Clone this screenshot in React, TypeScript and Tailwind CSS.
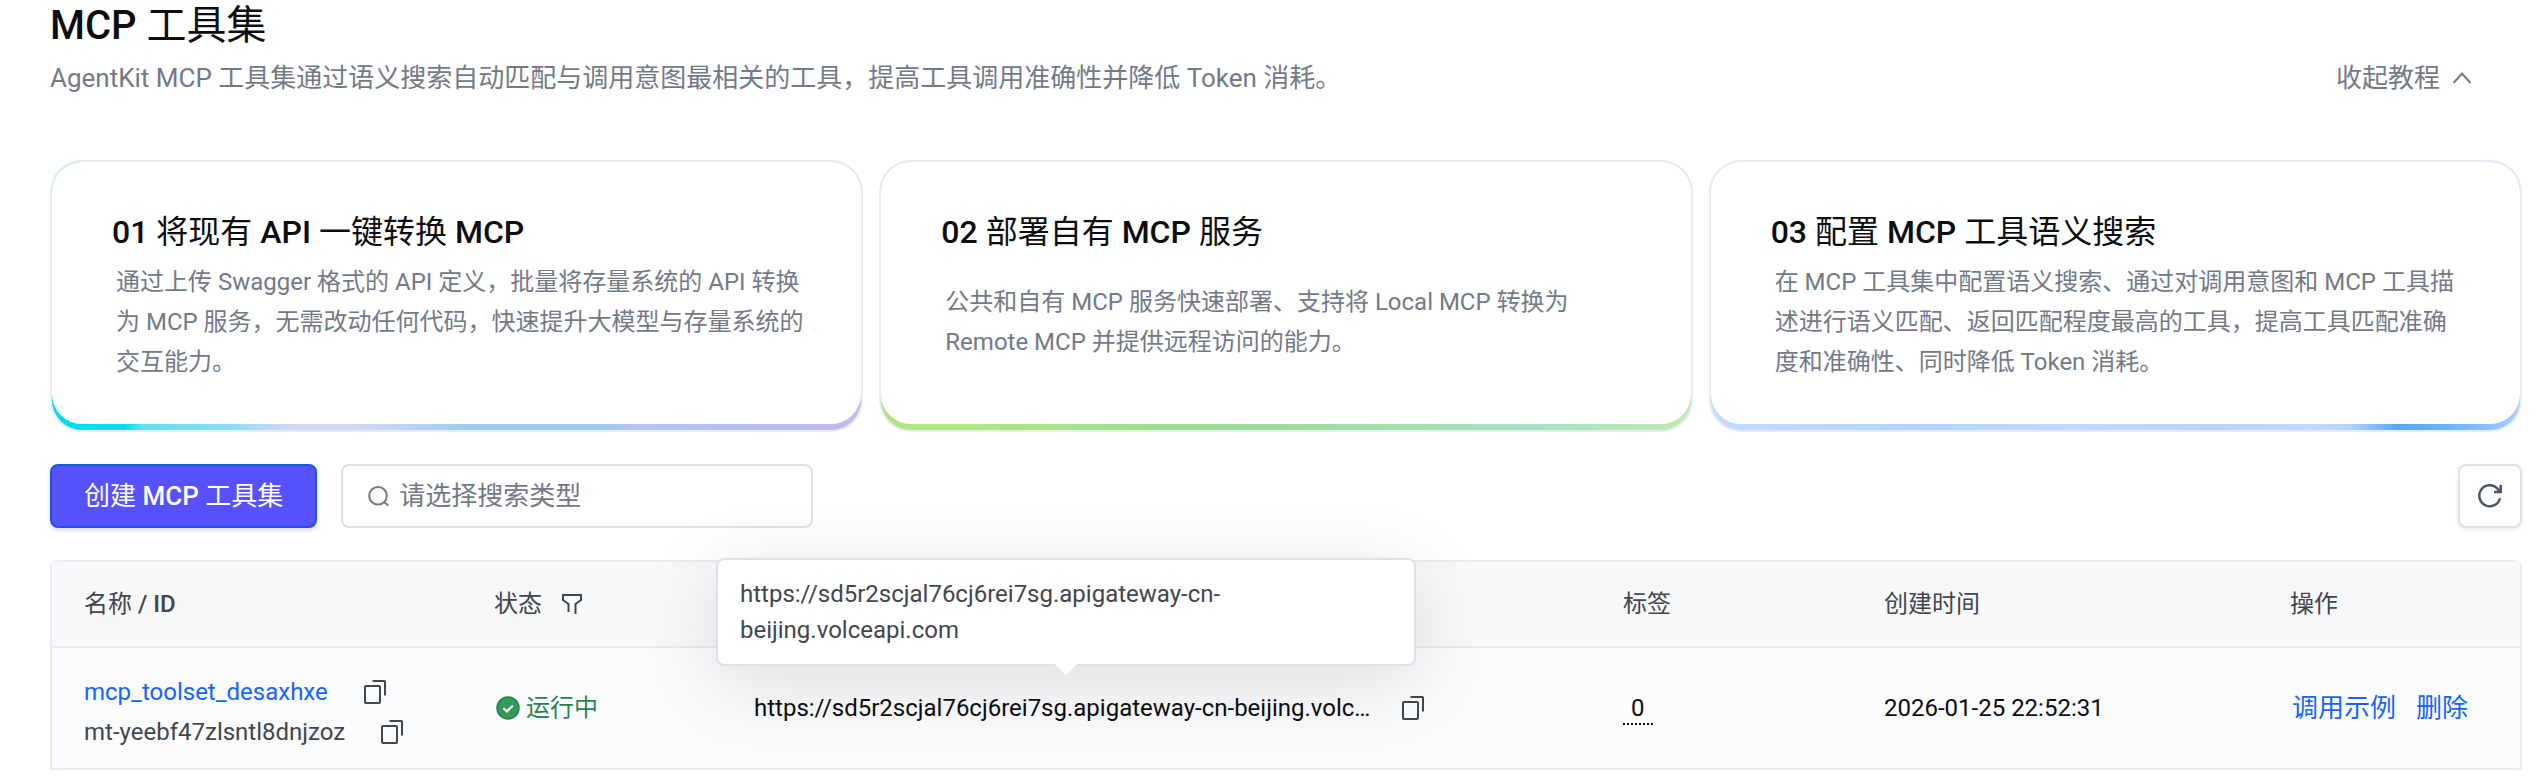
import { useId, type ReactNode } from "react";

const FONT = "font-['Roboto','Noto_Sans_CJK_SC',sans-serif]";

const ENDPOINT = "https://sd5r2scjal76cj6rei7sg.apigateway-cn-beijing.volceapi.com";

function shorten(text: string, max: number) {
  return text.length > max ? `${text.slice(0, max)}…` : text;
}

/* Chinese runs keep the regular weight while Latin runs take the heading weight. */
function Mixed({ text }: { text: string }) {
  return (
    <>
      {text.split(/([\u4e00-\u9fff]+)/).map((part, i) =>
        i % 2 === 1 ? (
          <span key={i} className="font-normal">
            {part}
          </span>
        ) : (
          part
        ),
      )}
    </>
  );
}

function CopyButton({ label }: { label: string }) {
  return (
    <button type="button" aria-label={label} className="flex shrink-0 text-[#42464e]">
      <svg viewBox="0 0 24 24" className="size-6" fill="none" stroke="currentColor" strokeWidth="2" aria-hidden="true">
        <rect x="1" y="6" width="15" height="17" rx="1" />
        <path d="M8.500 1H20.500q.5 0 .5.5V15.500" />
      </svg>
    </button>
  );
}

const cards = [
  {
    title: "01 将现有 API 一键转换 MCP",
    text: "通过上传 Swagger 格式的 API 定义，批量将存量系统的 API 转换为 MCP 服务，无需改动任何代码，快速提升大模型与存量系统的交互能力。",
    strip: "bg-[linear-gradient(90deg,#00dcf0_0%,#00dcf0_9%,#5fe0f2_11%,#8fdcf2_22%,#d3d8f4_30%,#d3d8f4_37%,#98cdee_53%,#98cdee_66%,#b4c6f0_72%,#bcbcec_95%)]",
  },
  {
    title: "02 部署自有 MCP 服务",
    text: "公共和自有 MCP 服务快速部署、支持将 Local MCP 转换为 Remote MCP 并提供远程访问的能力。",
    strip: "bg-[linear-gradient(90deg,#b2e684_0%,#b2e684_8%,#98df94_40%,#9fe0a8_60%,#a4e2c2_80%,#bfe9b0_100%)]",
  },
  {
    title: "03 配置 MCP 工具语义搜索",
    text: "在 MCP 工具集中配置语义搜索、通过对调用意图和 MCP 工具描述进行语义匹配、返回匹配程度最高的工具，提高工具匹配准确度和准确性、同时降低 Token 消耗。",
    strip: "bg-[linear-gradient(90deg,#c6dcfb_0%,#b4d2fb_25%,#c3d9fa_45%,#b8d2fa_62%,#c3d9fa_74%,#b4d2fb_79%,#56a8ff_85%,#6cb2ff_91%,#a9cdfd_100%)]",
  },
];

function GuideCard({ title, text, strip }: { title: string; text: string; strip: string }) {
  return (
    <article className="rounded-[32px] bg-[#e8ebf2] p-[2px]">
      <div className={`rounded-[30px] pb-[6px] ${strip}`}>
        <div className="rounded-[30px] bg-white pt-[46px] pr-[48px] pb-[42px] pl-[60px]">
          <h2 className="text-[32px] leading-[48px] font-medium text-[#0c0d0e]">
            <Mixed text={title} />
          </h2>
          <div className="mt-[6px] flex min-h-[120px] items-center px-1">
            <p className="text-[24px] leading-[40px] text-[#737a87]">{text}</p>
          </div>
        </div>
      </div>
    </article>
  );
}

function Th({ children }: { children?: ReactNode }) {
  return (
    <th scope="col" className="h-[86px] border-b-2 border-[#e8ebf2] px-8 text-left font-medium text-[#42464e]">
      {children}
    </th>
  );
}

export default function App() {
  const searchId = useId();
  return (
    <main className={`${FONT} bg-white pr-[14px] pb-2 pl-[50px] text-[24px] leading-[40px] text-[#0c0d0e]`}>
      <header>
        <h1 className="text-[40px] leading-[52px] font-medium">
          <Mixed text="MCP 工具集" />
        </h1>
        <div className="mt-1 flex items-center justify-between pr-[48px] text-[26px] leading-[44px] text-[#737a87]">
          <p>AgentKit MCP 工具集通过语义搜索自动匹配与调用意图最相关的工具，提高工具调用准确性并降低 Token 消耗。</p>
          <button type="button" className="flex items-center gap-[10px]">
            收起教程
            <svg viewBox="0 0 24 24" className="size-6" fill="none" stroke="currentColor" strokeWidth="2" aria-hidden="true">
              <path d="M3.500 17 12 7.500 20.500 17" />
            </svg>
          </button>
        </div>
      </header>

      <section className="mt-[60px] grid grid-cols-3 gap-4">
        {cards.map((card) => (
          <GuideCard key={card.title} {...card} />
        ))}
      </section>

      <div className="mt-8 flex items-center gap-6">
        <button
          type="button"
          className="h-16 rounded-lg border-2 border-[#1759dd] bg-[#5751ff] px-8 text-[26px] font-medium text-white shadow-[0_2px_4px_rgba(0,0,0,0.15)]"
        >
          <Mixed text="创建 MCP 工具集" />
        </button>
        <label
          htmlFor={searchId}
          className="flex h-16 w-[472px] items-center gap-2 rounded-lg border-2 border-[#dde2e9] bg-white px-6 text-[#737a87]"
        >
          <svg viewBox="0 0 24 24" className="size-6 shrink-0" fill="none" stroke="currentColor" strokeWidth="2" aria-hidden="true">
            <circle cx="11" cy="11.700" r="8.800" />
            <path d="m17.300 18.200 4 3.400" />
          </svg>
          <input
            id={searchId}
            type="text"
            placeholder="请选择搜索类型"
            aria-label="请选择搜索类型"
            className="min-w-0 flex-1 bg-transparent text-[26px] text-[#0c0d0e] outline-none placeholder:text-[#737a87]"
          />
        </label>
        <button
          type="button"
          aria-label="刷新"
          className="ml-auto flex size-16 items-center justify-center rounded-lg border-2 border-[#dde2e9] bg-white text-[#4b5769] shadow-[0_2px_4px_rgba(0,0,0,0.08)]"
        >
          <svg viewBox="0 0 24 24" className="size-6" fill="none" stroke="currentColor" strokeWidth="2.500" aria-hidden="true">
            <path d="M22 14.300A10.500 10.500 0 1 1 19.500 4.600L21.500 7" />
            <path d="M22.700 1v7H16" />
          </svg>
        </button>
      </div>

      <div className="mt-8 rounded-t-lg border-2 border-[#e8ebf2] bg-[#fafbfd]">
        <table className="w-full table-fixed border-separate border-spacing-0">
          <colgroup>
            <col className="w-[410px]" />
            <col className="w-[260px]" />
            <col className="w-[869px]" />
            <col className="w-[261px]" />
            <col className="w-[406px]" />
            <col />
          </colgroup>
          <thead>
            <tr className="bg-[#f6f8fa]">
              <Th>
                <Mixed text="名称 / ID" />
              </Th>
              <Th>
                <span className="flex items-center gap-[18px]">
                  <Mixed text="状态" />
                  <button type="button" aria-label="筛选状态">
                    <svg viewBox="0 0 24 24" className="size-6" fill="none" stroke="currentColor" strokeWidth="2" aria-hidden="true">
                      <path d="M8.500 20v-8L3 8V3h18v5l-5.500 4V22" />
                    </svg>
                  </button>
                </span>
              </Th>
              <Th />
              <Th>
                <Mixed text="标签" />
              </Th>
              <Th>
                <Mixed text="创建时间" />
              </Th>
              <Th>
                <Mixed text="操作" />
              </Th>
            </tr>
          </thead>
          <tbody>
            <tr className="h-[120px]">
              <td className="px-8 pt-2">
                <div className="flex items-center gap-9">
                  <a href="#toolset" className="text-[#1664ff]">mcp_toolset_desaxhxe</a>
                  <CopyButton label="复制名称" />
                </div>
                <div className="flex items-center gap-9 text-[#42464e]">
                  <span>mt-yeebf47zlsntl8dnjzoz</span>
                  <CopyButton label="复制 ID" />
                </div>
              </td>
              <td className="px-8">
                <span className="flex items-center gap-[6px] pl-[2px] text-[#2a8251]">
                  <svg viewBox="0 0 24 24" className="size-6" aria-hidden="true">
                    <circle cx="12" cy="12" r="11" fill="#359759" stroke="#2a8251" strokeWidth="1.500" />
                    <path d="m7.500 12.300 3.300 3.100 6-5.700" fill="none" stroke="white" strokeWidth="2.200" />
                  </svg>
                  运行中
                </span>
              </td>
              <td className="px-8">
                <div className="relative flex w-[700px] items-center">
                  <span className="w-[648px]" title={ENDPOINT}>{shorten(ENDPOINT, 56)}</span>
                  <CopyButton label="复制地址" />
                  <div
                    role="tooltip"
                    className="absolute bottom-[62px] -left-[38px] w-[700px] rounded-lg border-2 border-[#dde2e9] bg-white px-[22px] py-4 leading-[36px] text-[#42464e] shadow-[0_16px_80px_rgba(0,0,0,0.12)]"
                  >
                    {ENDPOINT}
                    <svg viewBox="0 0 22 12" className="absolute top-full left-1/2 h-3 w-[22px] -translate-x-1/2" aria-hidden="true">
                      <path d="M0 0h22L11 11Z" fill="white" />
                    </svg>
                  </div>
                </div>
              </td>
              <td className="px-8">
                <button type="button" className="border-b-2 border-dotted border-[#0c0d0e] px-2 leading-[30px]">0</button>
              </td>
              <td className="px-8">2026-01-25 22:52:31</td>
              <td className="px-8">
                <div className="flex gap-5 pl-[2px] text-[26px] whitespace-nowrap text-[#1664ff]">
                  <a href="#example">调用示例</a>
                  <a href="#delete">删除</a>
                </div>
              </td>
            </tr>
          </tbody>
        </table>
      </div>
    </main>
  );
}
